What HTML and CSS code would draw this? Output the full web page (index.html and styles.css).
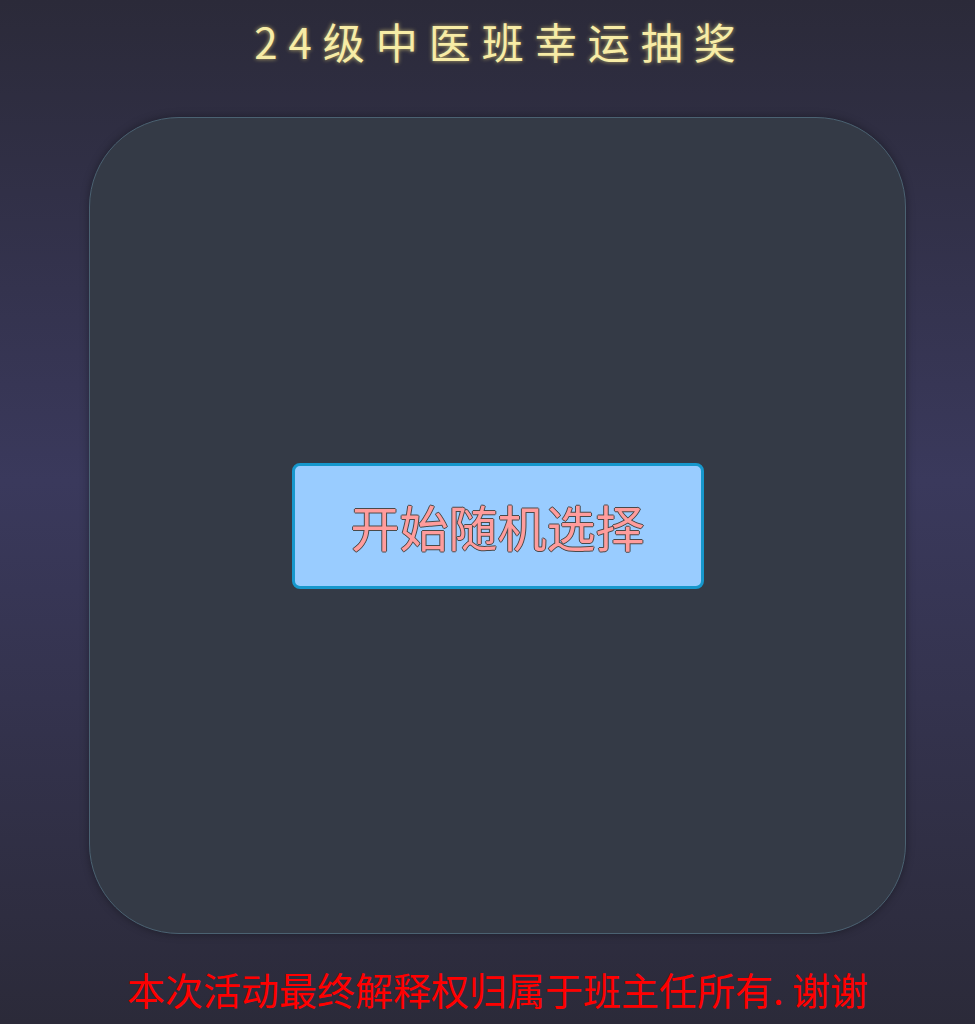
FILE: index.html
```html
<!DOCTYPE html>
<html lang="zh">

<head>
    <meta charset="UTF-8">
    <meta name="viewport" content="width=device-width, initial-scale=1.0">
    <title>24级中医班幸运抽奖</title>
    <link rel="stylesheet" href="styles.css">
</head>

<body>

    <div class="page">
        <h1 class="title">24级中医班幸运抽奖</h1>
        <div class="box">
            <button id="start" class="btn">开始随机选择</button>
        </div>
        <p class="note">本次活动最终解释权归属于班主任所有. 谢谢</p>
    </div>

</body>

</html>
```

FILE: styles.css
```css
html,
body {
    height: 100%;
}

body {
    margin: 0;
    background: linear-gradient(to bottom, #2b2a39 0%, #3a395c 47%, #2b2a39 100%);
    font-family: "Noto Sans CJK SC", "Noto Sans", sans-serif;
    overflow: hidden;
}

.page {
    display: flex;
    flex-direction: column;
    align-items: center;
    padding-left: 20px;
}

.title {
    margin: 14px 0 0 6px;
    font-size: 42px;
    font-weight: 400;
    line-height: 54px;
    letter-spacing: 11px;
    color: #f7eca6;
    text-shadow: 0 0 4px rgba(255, 235, 130, 0.7);
}

.box {
    margin-top: 49px;
    width: 815px;
    height: 815px;
    border: 1px solid #4b6272;
    border-radius: 90px;
    background-color: #343a46;
    box-shadow: 0 0 8px rgba(0, 0, 0, 0.35);
    display: flex;
    justify-content: center;
    align-items: center;
}

.btn {
    width: 412px;
    height: 126px;
    border: 3px solid #1697cc;
    border-radius: 8px;
    background-color: #99ccff;
    font-family: "Noto Sans CJK SC", sans-serif;
    font-size: 49px;
    color: #ff9c9c;
    text-shadow: 1px 0 0 #4a4a4a, -1px 0 0 #4a4a4a, 0 1px 0 #4a4a4a, 0 -1px 0 #4a4a4a;
    cursor: pointer;
}

.note {
    margin: 30px 0 0 0;
    font-size: 38px;
    line-height: 50px;
    color: #ff0000;
}
```
